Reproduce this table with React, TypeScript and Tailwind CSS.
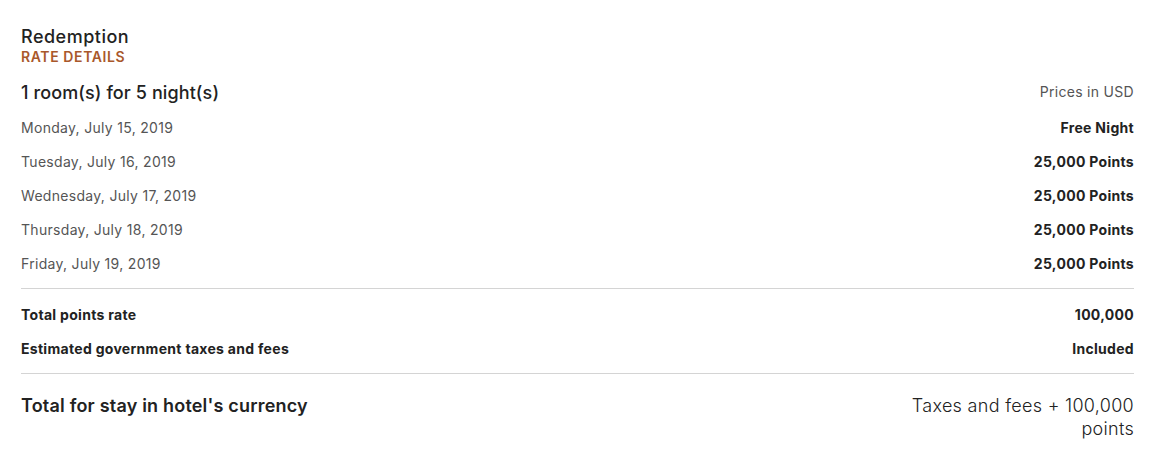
const NIGHTS = [
    { date: 'Monday, July 15, 2019', rate: 'Free Night' },
    { date: 'Tuesday, July 16, 2019', rate: '25,000 Points' },
    { date: 'Wednesday, July 17, 2019', rate: '25,000 Points' },
    { date: 'Thursday, July 18, 2019', rate: '25,000 Points' },
    { date: 'Friday, July 19, 2019', rate: '25,000 Points' },
];

export default function App() {
    return (
        <div className="w-[1155px] h-[452px] bg-white px-[21px] pt-[26px] text-[#222] font-['Inter',sans-serif]">
            {/* Heading */}
            <h1 className="text-[18px] leading-[22px] font-medium tracking-[0.5px]">Redemption</h1>
            <p className="text-[14px] leading-[18px] font-semibold text-[#a9582b] uppercase tracking-[0.6px]">Rate Details</p>

            <div className="flex justify-between items-center mt-[14px] h-[24px]">
                <span className="text-[18px] font-medium tracking-[0.1px]">1 room(s) for 5 night(s)</span>
                <span className="text-[14px] text-[#555] tracking-[0.3px] -mt-[2px]">Prices in USD</span>
            </div>

            {/* Nightly rates */}
            <div className="mt-[6px] pb-[8px] tracking-[0.3px]">
                {NIGHTS.map((n) => (
                    <div key={n.date} className="flex justify-between items-center h-[34px] text-[14px]">
                        <span className="text-[#555]">{n.date}</span>
                        <span className="font-bold">{n.rate}</span>
                    </div>
                ))}
            </div>

            <div className="border-t border-[#d4d4d4] pt-[8px] pb-[8px] tracking-[0.3px]">
                <div className="flex justify-between items-center h-[34px] text-[14px] font-bold">
                    <span>Total points rate</span>
                    <span>100,000</span>
                </div>
                <div className="flex justify-between items-center h-[34px] text-[14px] font-bold">
                    <span>Estimated government taxes and fees</span>
                    <span>Included</span>
                </div>
            </div>

            <div className="border-t border-[#d4d4d4] flex justify-between items-start pt-[20px]">
                <span className="text-[18px] leading-[23px] font-semibold tracking-[0.2px]">Total for stay in hotel's currency</span>
                <span className="text-[18px] leading-[23px] font-light text-right w-[236px] tracking-[0.3px]">
                    Taxes and fees + 100,000 points
                </span>
            </div>
        </div>
    );
}
